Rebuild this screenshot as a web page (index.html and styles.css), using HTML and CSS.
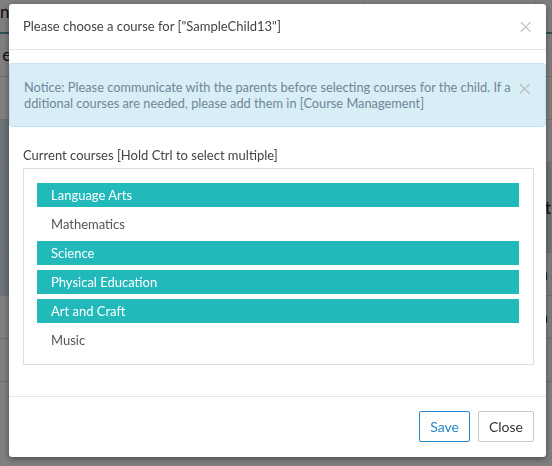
FILE: index.html
```html
<!DOCTYPE html>
<html lang="en">
<head>
    <meta charset="UTF-8">
    <title>Choose Course</title>
    <link rel="stylesheet" href="styles.css">
</head>
<body>
    <!-- Page behind the dialog -->
    <table class="page-table">
        <tr class="head-row"><td class="edge">ne</td><td></td><td></td><td></td><td class="edge">e</td></tr>
        <tr><td class="edge">es</td><td></td><td></td><td></td><td class="edge"></td></tr>
        <tr><td class="edge"></td><td></td><td></td><td></td><td class="edge">u</td></tr>
        <tr class="picked"><td class="edge"></td><td></td><td></td><td></td><td class="edge">e</td></tr>
        <tr class="tall picked"><td class="edge"></td><td></td><td></td><td></td><td class="edge">nt</td></tr>
        <tr class="picked"><td class="edge"></td><td></td><td></td><td></td><td class="edge">ia</td></tr>
        <tr><td class="edge"></td><td></td><td></td><td></td><td class="edge">ia</td></tr>
        <tr><td class="edge"></td><td></td><td></td><td></td><td class="edge"></td></tr>
    </table>

    <div class="overlay"></div>

    <!-- Dialog -->
    <div class="modal">
        <div class="modal-header">
            <span class="modal-title">Please choose a course for ["SampleChild13"]</span>
            <span class="close">&times;</span>
        </div>

        <div class="alert">
            <p>Notice: Please communicate with the parents before selecting courses for the child. If additional courses are needed, please add them in [Course Management]</p>
            <span class="close alert-close">&times;</span>
        </div>

        <div class="modal-body">
            <label for="courses">Current courses [Hold Ctrl to select multiple]</label>
            <div class="course-list" id="courses">
                <div class="course selected">Language Arts</div>
                <div class="course">Mathematics</div>
                <div class="course selected">Science</div>
                <div class="course selected">Physical Education</div>
                <div class="course selected">Art and Craft</div>
                <div class="course">Music</div>
            </div>
        </div>

        <div class="modal-footer">
            <button type="button" class="btn btn-save">Save</button>
            <button type="button" class="btn">Close</button>
        </div>
    </div>
</body>
</html>
```

FILE: styles.css
```css
/* Basic Reset */
* {
    margin: 0;
    padding: 0;
    box-sizing: border-box;
}

body {
    font-family: 'Lato', sans-serif;
    font-size: 13px;
    color: #333;
    background-color: #fff;
    width: 552px;
    height: 466px;
    overflow: hidden;
}

/* Background page */
.page-table {
    width: 552px;
    border-collapse: collapse;
    margin-top: -10px;
    font-size: 17px;
    color: #222;
}

.page-table td {
    height: 43px;
    border-bottom: 1px solid #ddd;
    border-right: 1px solid #eee;
}

.page-table td.edge {
    width: 9px;
    overflow: hidden;
    white-space: nowrap;
    text-align: right;
    direction: rtl;
}

.page-table td.edge:last-child {
    text-align: left;
    direction: ltr;
}

.page-table .head-row td {
    border-bottom: 2px solid #5a9fa8;
}

.page-table .tall td {
    height: 90px;
}

.page-table .picked td:first-child {
    background-color: #dde6ee;
}

.page-table .tall td:last-child {
    background-color: #dde6ee;
}

.overlay {
    position: fixed;
    inset: 0;
    background-color: rgba(0, 0, 0, 0.5);
}

/* Dialog */
.modal {
    position: absolute;
    left: 9px;
    top: 4px;
    width: 537px;
    height: 453px;
    background-color: #fff;
    border-radius: 3px;
    box-shadow: 0 2px 6px rgba(0, 0, 0, 0.4);
    display: flex;
    flex-direction: column;
}

.modal-header {
    height: 46px;
    display: flex;
    align-items: center;
    justify-content: space-between;
    padding: 0 12px 1px 14px;
    border-bottom: 1px solid #e5e5e5;
}

.modal-title {
    font-size: 13px;
    color: #444;
}

.close {
    font-size: 20px;
    line-height: 1;
    color: #b5b5b5;
    font-family: 'DejaVu Sans', sans-serif;
    font-weight: 300;
}

.alert {
    position: relative;
    margin-top: 13px;
    height: 64px;
    padding: 15px 0 0 14px;
    background-color: #d9edf7;
    border: 1px solid #c4e3f0;
    border-radius: 3px;
    color: #6e8796;
    font-size: 12.8px;
    line-height: 16px;
}

.alert p {
    width: 490px;
    word-break: break-all;
}

.alert-close {
    position: absolute;
    right: 12px;
    top: 14px;
}

.modal-body {
    flex: 1;
    padding: 20px 12px 0 14px;
}

label {
    display: block;
    color: #444;
    font-size: 13px;
    margin-bottom: 5px;
}

.course-list {
    height: 197px;
    border: 1px solid #dedede;
    padding: 14px 14px 0 13px;
    display: flex;
    flex-direction: column;
    gap: 5px;
}

.course {
    height: 24px;
    line-height: 24px;
    padding-left: 14px;
    color: #555;
}

.course.selected {
    background-color: #22b9bb;
    color: #fff;
}

.modal-footer {
    height: 61px;
    border-top: 1px solid #e5e5e5;
    display: flex;
    justify-content: flex-end;
    align-items: flex-start;
    gap: 8px;
    padding: 14px 12px 0 0;
}

.btn {
    height: 31px;
    padding: 0 10px;
    font-family: 'Lato', sans-serif;
    font-size: 14px;
    color: #333;
    background-color: #fff;
    border: 1px solid #c8c8c8;
    border-radius: 2px;
    cursor: pointer;
}

.btn-save {
    color: #2589cc;
    border-color: #2589cc;
}
```
